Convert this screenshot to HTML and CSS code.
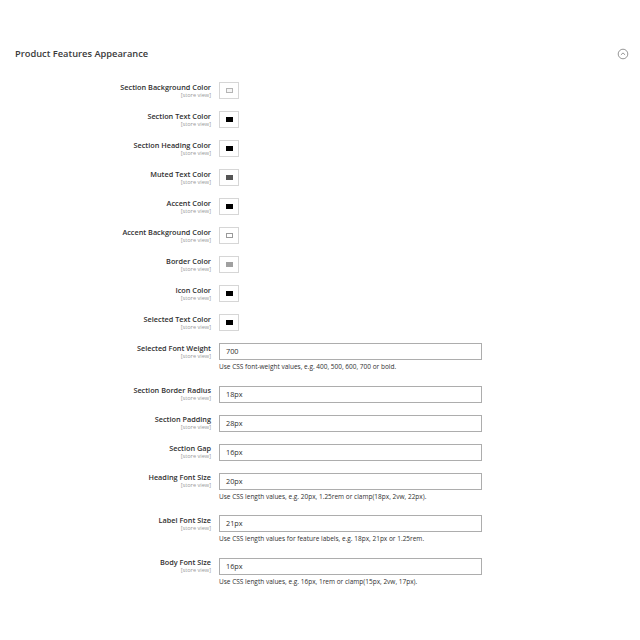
FILE: index.html
```html
<!DOCTYPE html>
<html>
<head>
<meta charset="utf-8">
<link rel="stylesheet" href="styles.css">
</head>
<body>
<div class="page">
  <div class="section-head">
    <h2 class="title">Product Features Appearance</h2>
    <svg class="toggle" width="12" height="12" viewBox="0 0 12 12"><circle cx="6" cy="6" r="4.8" fill="none" stroke="#8a8a8a" stroke-width="0.9"/><path d="M3.9 6.9 L6 4.9 L8.1 6.9" fill="none" stroke="#8a8a8a" stroke-width="0.9"/></svg>
  </div>
  <div class="form">
    <div class="row"><div class="lbl"><span class="name">Section Background Color</span><span class="scope">[store view]</span></div><div class="ctl"><span class="swatch"><span class="chip chip-light"></span></span></div></div>
    <div class="row"><div class="lbl"><span class="name">Section Text Color</span><span class="scope">[store view]</span></div><div class="ctl"><span class="swatch"><span class="chip chip-black"></span></span></div></div>
    <div class="row"><div class="lbl"><span class="name">Section Heading Color</span><span class="scope">[store view]</span></div><div class="ctl"><span class="swatch"><span class="chip chip-black"></span></span></div></div>
    <div class="row"><div class="lbl"><span class="name">Muted Text Color</span><span class="scope">[store view]</span></div><div class="ctl"><span class="swatch"><span class="chip chip-dark"></span></span></div></div>
    <div class="row"><div class="lbl"><span class="name">Accent Color</span><span class="scope">[store view]</span></div><div class="ctl"><span class="swatch"><span class="chip chip-black"></span></span></div></div>
    <div class="row"><div class="lbl"><span class="name">Accent Background Color</span><span class="scope">[store view]</span></div><div class="ctl"><span class="swatch"><span class="chip chip-white"></span></span></div></div>
    <div class="row"><div class="lbl"><span class="name">Border Color</span><span class="scope">[store view]</span></div><div class="ctl"><span class="swatch"><span class="chip chip-gray"></span></span></div></div>
    <div class="row"><div class="lbl"><span class="name">Icon Color</span><span class="scope">[store view]</span></div><div class="ctl"><span class="swatch"><span class="chip chip-black"></span></span></div></div>
    <div class="row"><div class="lbl"><span class="name">Selected Text Color</span><span class="scope">[store view]</span></div><div class="ctl"><span class="swatch"><span class="chip chip-black"></span></span></div></div>
    <div class="row with-note"><div class="lbl"><span class="name">Selected Font Weight</span><span class="scope">[store view]</span></div><div class="ctl"><div class="input">700</div><div class="note">Use CSS font-weight values, e.g. 400, 500, 600, 700 or bold.</div></div></div>
    <div class="row"><div class="lbl"><span class="name">Section Border Radius</span><span class="scope">[store view]</span></div><div class="ctl"><div class="input">18px</div></div></div>
    <div class="row"><div class="lbl"><span class="name">Section Padding</span><span class="scope">[store view]</span></div><div class="ctl"><div class="input">28px</div></div></div>
    <div class="row"><div class="lbl"><span class="name">Section Gap</span><span class="scope">[store view]</span></div><div class="ctl"><div class="input">16px</div></div></div>
    <div class="row with-note"><div class="lbl"><span class="name">Heading Font Size</span><span class="scope">[store view]</span></div><div class="ctl"><div class="input">20px</div><div class="note">Use CSS length values, e.g. 20px, 1.25rem or clamp(18px, 2vw, 22px).</div></div></div>
    <div class="row with-note"><div class="lbl"><span class="name">Label Font Size</span><span class="scope">[store view]</span></div><div class="ctl"><div class="input">21px</div><div class="note">Use CSS length values for feature labels, e.g. 18px, 21px or 1.25rem.</div></div></div>
    <div class="row with-note"><div class="lbl"><span class="name">Body Font Size</span><span class="scope">[store view]</span></div><div class="ctl"><div class="input">16px</div><div class="note">Use CSS length values, e.g. 16px, 1rem or clamp(15px, 2vw, 17px).</div></div></div>
  </div>
</div>
</body>
</html>
```
FILE: styles.css
```css
html, body {
  margin: 0;
  padding: 0;
  background: #ffffff;
}
body {
  font-family: "Open Sans", "Liberation Sans", sans-serif;
  color: #303030;
}
.page {
  padding: 48px 11px 0 15px;
}
.section-head {
  display: flex;
  align-items: center;
  justify-content: space-between;
  height: 12px;
}
.title {
  margin: 0;
  font-size: 9.3px;
  line-height: 12px;
  font-weight: 600;
  color: #3a3a3a;
}
.toggle {
  display: block;
}
.form {
  padding-top: 22px;
}
.row {
  display: flex;
  align-items: flex-start;
  gap: 8px;
  margin-bottom: 12px;
}
.row.with-note {
  margin-bottom: 14.5px;
}
.lbl {
  width: 196px;
  flex: none;
  display: flex;
  flex-direction: column;
  align-items: flex-end;
  text-align: right;
  padding-top: 0.5px;
}
.name {
  font-size: 7.3px;
  line-height: 9px;
  font-weight: 600;
  color: #303030;
}
.scope {
  font-size: 5.6px;
  line-height: 6.5px;
  color: #999999;
}
.ctl {
  display: flex;
  flex-direction: column;
}
.swatch {
  width: 20px;
  height: 17px;
  box-sizing: border-box;
  border: 1px solid #d6d6d6;
  background: #ffffff;
  display: flex;
  align-items: center;
  justify-content: center;
}
.chip {
  width: 7px;
  height: 5px;
  box-sizing: border-box;
}
.chip-black { background: #000000; }
.chip-dark { background: #555555; }
.chip-gray { background: #a0a0a0; }
.chip-light { background: #f6f6f6; border: 0.6px solid #b5b5b5; }
.chip-white { background: #ffffff; border: 0.6px solid #9a9a9a; }
.input {
  width: 263px;
  height: 17px;
  box-sizing: border-box;
  border: 1px solid #adadad;
  padding: 0 6px;
  font-size: 7.3px;
  line-height: 15px;
  color: #303030;
}
.note {
  margin-top: 3px;
  font-size: 6.5px;
  line-height: 8px;
  color: #303030;
}
```
